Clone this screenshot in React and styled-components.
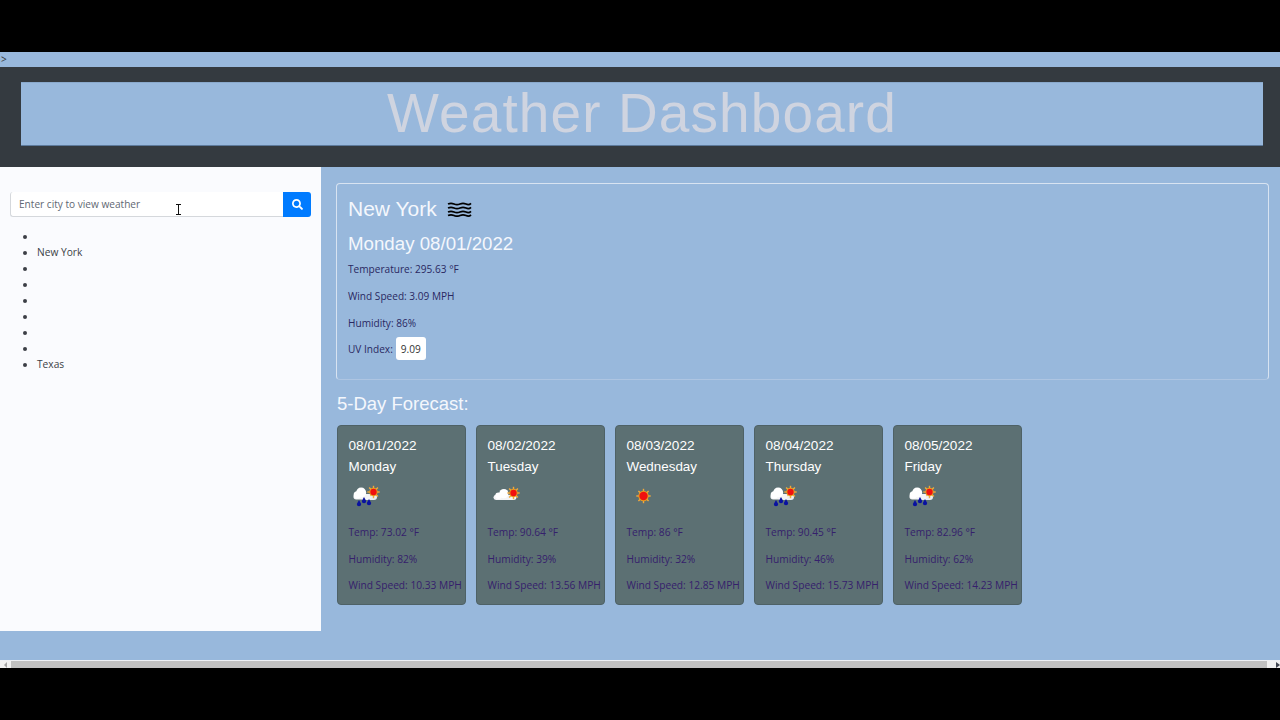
import React from 'react'
import styled, { createGlobalStyle } from 'styled-components'
import { FaSearch } from 'react-icons/fa'

const GlobalStyle = createGlobalStyle`
  html, body {
    margin: 0;
    padding: 0;
    background: #000;
    overflow: hidden;
  }
`

const Screen = styled.div`
  width: 1280px;
  height: 720px;
  background: #000;
  padding: 52px 0;
  box-sizing: border-box;
  display: flex;
  flex-direction: column;
  font-family: "Open Sans", "Liberation Sans", sans-serif;
`

const Page = styled.div`
  flex: 1;
  display: flex;
  flex-direction: column;
  background: #98b8dc;
  min-height: 0;
`

const TopStrip = styled.div`
  height: 15px;
  font-size: 10px;
  line-height: 14px;
  color: #333;
  padding-left: 1px;
`

const Header = styled.header`
  height: 100px;
  background: #343a40;
  padding: 15px 17px 21px 21px;
  box-sizing: border-box;
`

const TitleBox = styled.div`
  height: 64px;
  background: #98b8dc;
  border-top: 1px solid #8aa9cc;
  border-bottom: 1px solid #5d7a9c;
  box-sizing: border-box;
  display: flex;
  align-items: center;
  justify-content: center;
  padding-bottom: 2px;
`

const Title = styled.h1`
  margin: 0;
  font-family: "Liberation Sans", Arial, sans-serif;
  font-weight: 400;
  font-size: 55px;
  letter-spacing: 1.1px;
  color: #cfd4e0;
`

const Body = styled.div`
  flex: 1;
  display: flex;
  min-height: 0;
`

const Sidebar = styled.aside`
  width: 321px;
  height: 464px;
  background: #fafbfe;
  padding: 25px 10px 0;
  box-sizing: border-box;
`

const SearchRow = styled.div`
  position: relative;
  display: flex;
  width: 301px;
  height: 25px;
`

const SearchInput = styled.div`
  flex: 1;
  background: #fff;
  border: 1px solid #d5d8dc;
  border-width: 0 0 1px 1px;
  border-radius: 3px 0 0 3px;
  padding-left: 8px;
  font-size: 10.1px;
  line-height: 25px;
  color: #5f6873;
`

const SearchButton = styled.div`
  width: 28px;
  background: #007bff;
  border-radius: 0 3px 3px 0;
  color: #fff;
  display: flex;
  align-items: center;
  justify-content: center;
  font-size: 11px;
`

const TextCursor = styled.svg`
  position: absolute;
  left: 165px;
  top: 12px;
`

const CityList = styled.ul`
  margin: 11px 0 0;
  padding: 0 0 0 27px;
  font-size: 10.2px;
  line-height: 16px;
  color: #3b3f46;
`

const Main = styled.main`
  flex: 1;
  padding: 16px 11px 0 15px;
  min-width: 0;
`

const CurrentCard = styled.section`
  height: 197px;
  box-sizing: border-box;
  border: 1px solid #d8e3f1;
  border-bottom-color: #aec5e2;
  border-radius: 4px;
  padding: 11px 11px 0;
`

const CityRow = styled.div`
  display: flex;
  align-items: center;
  gap: 10px;
  height: 28px;
`

const CityName = styled.h2`
  margin: 0;
  font-family: "Liberation Sans", Arial, sans-serif;
  font-weight: 400;
  font-size: 21px;
  color: #f4f7fc;
`

const CurrentDate = styled.h3`
  margin: 8px 0 0;
  font-family: "Liberation Sans", Arial, sans-serif;
  font-weight: 400;
  font-size: 18.7px;
  line-height: 25px;
  color: #f4f7fc;
`

const Stat = styled.p`
  margin: 0;
  font-size: 10.1px;
  line-height: 27px;
  color: #2a2862;
  white-space: nowrap;
`

const UvRow = styled.div`
  display: flex;
  align-items: center;
  gap: 3px;
  font-size: 10.1px;
  color: #2a2862;
  height: 25px;
  margin-top: -1px;
`

const UvBadge = styled.span`
  width: 30px;
  height: 23px;
  background: #fff;
  border-radius: 3px;
  color: #333;
  display: flex;
  align-items: center;
  justify-content: center;
`

const ForecastTitle = styled.h4`
  margin: 13px 0 10px 1px;
  font-family: "Liberation Sans", Arial, sans-serif;
  font-weight: 400;
  font-size: 18.5px;
  line-height: 22px;
  color: #f4f7fc;
`

const ForecastRow = styled.div`
  display: flex;
  gap: 10px;
  padding-left: 1px;
`

const DayCard = styled.article`
  width: 129px;
  height: 180px;
  box-sizing: border-box;
  background: #5c7073;
  border: 1px solid #4e6166;
  border-radius: 4px;
  padding: 10px 0 0 10.5px;
`

const DayDate = styled.div`
  font-family: "Liberation Sans", Arial, sans-serif;
  font-size: 13.6px;
  line-height: 20px;
  color: #fff;
`

const DayName = styled.div`
  font-family: "Liberation Sans", Arial, sans-serif;
  font-size: 13.4px;
  line-height: 20px;
  margin-top: 1px;
  color: #fff;
`

const IconSlot = styled.div`
  height: 24px;
  margin: 7px 0 11px;
`

const DayStat = styled(Stat)`
  font-size: 10.2px;
  line-height: 26.5px;
  color: #35206c;
`

const Scrollbar = styled.div`
  height: 7px;
  display: flex;
  border-top: 1px solid #eef0f4;
  background: #f1f1f1;
`

const ScrollEnd = styled.div`
  width: ${({ $wide }) => ($wide ? '13px' : '11px')};
  display: flex;
  align-items: center;
  justify-content: ${({ $wide }) => ($wide ? 'flex-end' : 'center')};
`

const ScrollArrow = styled.i`
  width: 0;
  height: 0;
  border-top: 3px solid transparent;
  border-bottom: 3px solid transparent;
  ${({ $right }) => ($right ? 'border-left: 4px solid #404550;' : 'border-right: 3px solid #a3a3a3;')}
`

const ScrollThumb = styled.div`
  flex: 1;
  background: #c1c1c1;
`

const Waves = () => (
  <svg width="25" height="15" viewBox="0 0 25 15" fill="none" stroke="#000" strokeWidth="1.7">
    {[2, 6, 10, 13.5].map((y) => (
      <path key={y} d={`M1 ${y}q3-1.4 6 0t6 0t6 0t5-.7`} />
    ))}
  </svg>
)

const Sun = ({ x, y, r = 3.2 }) => (
  <g>
    {[0, 45, 90, 135, 180, 225, 270, 315].map((a) => (
      <rect key={a} x={x - 0.7} y={y - r - 3} width="1.4" height="3" fill="#f2a93b" transform={`rotate(${a} ${x} ${y})`} />
    ))}
    <circle cx={x} cy={y} r={r + 1} fill="#e8a020" />
    <circle cx={x} cy={y} r={r} fill="#f01010" />
  </g>
)

const Cloud = ({ x, y, w, h }) => (
  <g fill="#fff">
    <rect x={x} y={y + h * 0.55} width={w} height={h * 0.45} rx={h * 0.22} fill="#f4f4f6" />
    <circle cx={x + w * 0.45} cy={y + h * 0.42} r={h * 0.42} />
    <circle cx={x + w * 0.22} cy={y + h * 0.62} r={h * 0.3} />
  </g>
)

const Drop = ({ x, y }) => (
  <path d={`M${x} ${y - 4}l2.2 4a2.2 2.2 0 1 1-4.4 0z`} fill="#0a12a0" />
)

const RainIcon = () => (
  <svg width="36" height="24" viewBox="0 0 36 24">
    <rect x="12" y="10" width="16" height="6" rx="3" fill="#e9edf2" />
    <Sun x={24.5} y={8} />
    <Cloud x={4.5} y={3.5} w={17} h={12} />
    <Drop x={10} y={20} />
    <Drop x={15} y={17} />
    <Drop x={20} y={19} />
  </svg>
)

const CloudSunIcon = () => (
  <svg width="36" height="24" viewBox="0 0 36 24">
    <Cloud x={5.5} y={5} w={23} h={11} />
    <Sun x={25.5} y={9} />
  </svg>
)

const SunIcon = () => (
  <svg width="36" height="24" viewBox="0 0 36 24">
    <Sun x={16.5} y={12} r={4.2} />
  </svg>
)

const icons = { rain: RainIcon, cloudSun: CloudSunIcon, sun: SunIcon }

const forecast = [
  { date: '08/01/2022', day: 'Monday', icon: 'rain', temp: '73.02', humidity: '82', wind: '10.33' },
  { date: '08/02/2022', day: 'Tuesday', icon: 'cloudSun', temp: '90.64', humidity: '39', wind: '13.56' },
  { date: '08/03/2022', day: 'Wednesday', icon: 'sun', temp: '86', humidity: '32', wind: '12.85' },
  { date: '08/04/2022', day: 'Thursday', icon: 'rain', temp: '90.45', humidity: '46', wind: '15.73' },
  { date: '08/05/2022', day: 'Friday', icon: 'rain', temp: '82.96', humidity: '62', wind: '14.23' },
]

const cities = ['', 'New York', '', '', '', '', '', '', 'Texas']

const App = () => (
  <Screen>
    <GlobalStyle />
    <Page>
      <TopStrip>&gt;</TopStrip>
      <Header>
        <TitleBox>
          <Title>Weather Dashboard</Title>
        </TitleBox>
      </Header>
      <Body>
        <Sidebar>
          <SearchRow>
            <SearchInput>Enter city to view weather</SearchInput>
            <SearchButton><FaSearch /></SearchButton>
            <TextCursor width="7" height="11" viewBox="0 0 7 11" fill="none" stroke="#111" strokeWidth="1">
              <path d="M1 .5h5M3.5 .5v10M1 10.5h5" />
            </TextCursor>
          </SearchRow>
          <CityList>
            {cities.map((city, i) => (
              <li key={i}>{city || '\u00a0'}</li>
            ))}
          </CityList>
        </Sidebar>
        <Main>
          <CurrentCard>
            <CityRow>
              <CityName>New York</CityName>
              <Waves />
            </CityRow>
            <CurrentDate>Monday 08/01/2022</CurrentDate>
            <Stat>Temperature: 295.63 °F</Stat>
            <Stat>Wind Speed: 3.09 MPH</Stat>
            <Stat>Humidity: 86%</Stat>
            <UvRow>
              UV Index:
              <UvBadge>9.09</UvBadge>
            </UvRow>
          </CurrentCard>
          <ForecastTitle>5-Day Forecast:</ForecastTitle>
          <ForecastRow>
            {forecast.map((f) => {
              const Icon = icons[f.icon]
              return (
                <DayCard key={f.date}>
                  <DayDate>{f.date}</DayDate>
                  <DayName>{f.day}</DayName>
                  <IconSlot><Icon /></IconSlot>
                  <DayStat>Temp: {f.temp} °F</DayStat>
                  <DayStat>Humidity: {f.humidity}%</DayStat>
                  <DayStat>Wind Speed: {f.wind} MPH</DayStat>
                </DayCard>
              )
            })}
          </ForecastRow>
        </Main>
      </Body>
      <Scrollbar>
        <ScrollEnd><ScrollArrow /></ScrollEnd>
        <ScrollThumb />
        <ScrollEnd $wide><ScrollArrow $right /></ScrollEnd>
      </Scrollbar>
    </Page>
  </Screen>
)

export default App
